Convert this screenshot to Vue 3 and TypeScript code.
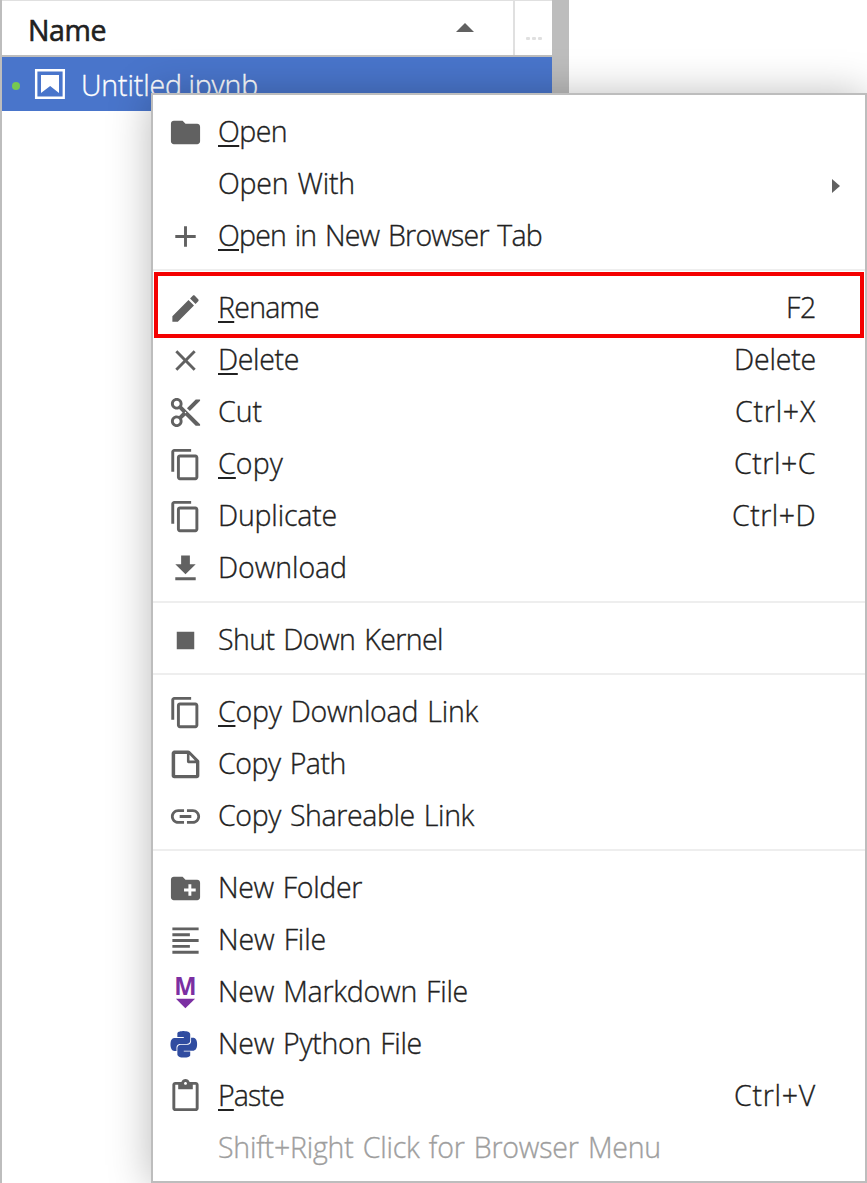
<script setup lang="ts">
interface MenuItem {
  label: string
  key?: string
  keyWidth?: number
  width: number
  mnemonic?: boolean
  icon?: string
  viewBox?: number
  glyph?: 'markdown' | 'python'
  submenu?: boolean
  disabled?: boolean
}

const copyIcon =
  'M11.9,1H3.2C2.4,1,1.7,1.7,1.7,2.5v10.2h1.5V2.5h8.7V1z M14.1,3.9h-8c-0.8,0-1.5,0.7-1.5,1.5v10.2c0,0.8,0.7,1.5,1.5,1.5h8c0.8,0,1.5-0.7,1.5-1.5V5.4C15.5,4.6,14.9,3.9,14.1,3.9z M14.1,15.5h-8V5.4h8V15.5z'

// One snake of the Python mark; the other is the same shape turned half a circle.
const snake =
  'M14.25.18l.9.2.73.26.59.3.45.32.34.34.25.34.16.33.1.3.04.26.02.2-.01.13V8.5l-.05.63-.13.55-.21.46-.26.38-.3.31-.33.25-.35.19-.35.14-.33.1-.3.07-.26.04-.21.02H8.77l-.69.05-.59.14-.5.22-.41.27-.33.32-.27.35-.2.36-.15.37-.1.35-.07.32-.04.27-.02.21v3.06H3.17l-.21-.03-.28-.07-.32-.12-.35-.18-.36-.26-.36-.36-.35-.46-.32-.59-.28-.73-.21-.88-.14-1.05-.05-1.23.06-1.22.16-1.04.24-.87.32-.71.36-.57.4-.44.42-.33.42-.24.4-.16.36-.1.32-.05.24-.01h.16l.06.01h8.16v-.83H6.18l-.01-2.75-.02-.37.05-.34.11-.31.17-.28.25-.26.31-.23.38-.2.44-.18.51-.15.58-.12.64-.1.71-.06.77-.04.84-.02 1.27.05z'

const groups: MenuItem[][] = [
  [
    { label: 'Open', width: 69, mnemonic: true, icon: 'M10 4H4c-1.1 0-1.99.9-1.99 2L2 18c0 1.1.9 2 2 2h16c1.1 0 2-.9 2-2V8c0-1.1-.9-2-2-2h-8l-2-2z' },
    { label: 'Open With', width: 137, submenu: true },
    { label: 'Open in New Browser Tab', width: 324, mnemonic: true, icon: 'M19 13h-6v6h-2v-6H5v-2h6V5h2v6h6v2z' },
  ],
  [
    { label: 'Rename', key: 'F2', keyWidth: 30, width: 101, mnemonic: true, icon: 'M3 17.25V21h3.75L17.81 9.94l-3.75-3.75L3 17.25zM20.71 7.04c.39-.39.39-1.02 0-1.41l-2.34-2.34c-.39-.39-1.02-.39-1.41 0l-1.83 1.83 3.75 3.75 1.83-1.83z' },
    { label: 'Delete', key: 'Delete', keyWidth: 82, width: 81, mnemonic: true, icon: 'M19 6.41L17.59 5 12 10.59 6.41 5 5 6.41 10.59 12 5 17.59 6.41 19 12 13.41 17.59 19 19 17.59 13.41 12z' },
    { label: 'Cut', key: 'Ctrl+X', keyWidth: 81, width: 44, icon: 'M9.64 7.64c.23-.5.36-1.05.36-1.64 0-2.21-1.79-4-4-4S2 3.79 2 6s1.79 4 4 4c.59 0 1.14-.13 1.64-.36L10 12l-2.36 2.36C7.14 14.13 6.59 14 6 14c-2.21 0-4 1.79-4 4s1.79 4 4 4 4-1.79 4-4c0-.59-.13-1.14-.36-1.64L12 14l7 7h3v-1L9.64 7.64zM6 8c-1.1 0-2-.89-2-2s.9-2 2-2 2 .89 2 2-.9 2-2 2zm0 12c-1.1 0-2-.89-2-2s.9-2 2-2 2 .89 2 2-.9 2-2 2zm6-7.5c-.28 0-.5-.22-.5-.5s.22-.5.5-.5.5.22.5.5-.22.5-.5.5zM19 3l-6 6 2 2 7-7V3z' },
    { label: 'Copy', key: 'Ctrl+C', keyWidth: 82, width: 65, mnemonic: true, icon: copyIcon, viewBox: 18 },
    { label: 'Duplicate', key: 'Ctrl+D', keyWidth: 84, width: 119, icon: copyIcon, viewBox: 18 },
    { label: 'Download', width: 129, icon: 'M19 9h-4V3H9v6H5l7 7 7-7zM5 18v2h14v-2H5z' },
  ],
  [{ label: 'Shut Down Kernel', width: 225, icon: 'M6 6h12v12H6z' }],
  [
    { label: 'Copy Download Link', width: 260, mnemonic: true, icon: copyIcon, viewBox: 18 },
    { label: 'Copy Path', width: 128, icon: 'M19.3 8.2l-5.5-5.5c-.3-.3-.7-.5-1.2-.5H3.9c-.8.1-1.6.9-1.6 1.8v14.1c0 .9.7 1.6 1.6 1.6h14.2c.9 0 1.6-.7 1.6-1.6V9.4c.1-.5-.1-.9-.4-1.2zm-5.8-3.3l3.4 3.6h-3.4V4.9zm3.9 12.7H4.7c-.1 0-.2 0-.2-.2V4.7c0-.2.1-.3.2-.3h7.2v4.4s0 .8.3 1.1c.3.3 1.1.3 1.1.3h4.3v7.2s-.1.2-.2.2z', viewBox: 22 },
    { label: 'Copy Shareable Link', width: 256, icon: 'M3.9 12c0-1.71 1.39-3.1 3.1-3.1h4V7H7c-2.76 0-5 2.24-5 5s2.24 5 5 5h4v-1.9H7c-1.71 0-3.1-1.39-3.1-3.1zM8 13h8v-2H8v2zm9-6h-4v1.9h4c1.71 0 3.1 1.39 3.1 3.1s-1.39 3.1-3.1 3.1h-4V17h4c2.76 0 5-2.24 5-5s-2.24-5-5-5z' },
  ],
  [
    { label: 'New Folder', width: 144, icon: 'M20 6h-8l-2-2H4c-1.11 0-1.99.89-1.99 2L2 18c0 1.11.89 2 2 2h16c1.11 0 2-.89 2-2V8c0-1.11-.89-2-2-2zm-1 8h-3v3h-2v-3h-3v-2h3V9h2v3h3v2z' },
    { label: 'New File', width: 108, icon: 'M15 15H3v2h12v-2zm0-8H3v2h12V7zM3 13h18v-2H3v2zm0 8h18v-2H3v2zM3 3v2h18V3H3z' },
    { label: 'New Markdown File', width: 250, glyph: 'markdown' },
    { label: 'New Python File', width: 204, glyph: 'python' },
    { label: 'Paste', key: 'Ctrl+V', keyWidth: 82, width: 66, mnemonic: true, icon: 'M19 2h-4.18C14.4.84 13.3 0 12 0c-1.3 0-2.4.84-2.82 2H5c-1.1 0-2 .9-2 2v16c0 1.1.9 2 2 2h14c1.1 0 2-.9 2-2V4c0-1.1-.9-2-2-2zm-7 0c.55 0 1 .45 1 1s-.45 1-1 1-1-.45-1-1 .45-1 1-1zm7 18H5V4h2v3h10V4h2v16z' },
    { label: 'Shift+Right Click for Browser Menu', width: 443, disabled: true },
  ],
]

// Tracks a text so that it takes up the given width.
const vFit = {
  mounted(el: HTMLElement, binding: { value: number }) {
    const count = (el.textContent ?? '').length
    const natural = el.getBoundingClientRect().width
    el.style.letterSpacing = `${(binding.value - natural) / count}px`
  },
}
</script>

<template>
  <main class="screen">
    <section class="browser">
      <header class="head">
        <div class="name">
          <span v-fit="78">Name</span>
          <svg class="sort" viewBox="0 0 18 9"><path d="M0 9L9 0l9 9z" /></svg>
        </div>
        <div class="more"><i></i><i></i><i></i></div>
      </header>
      <div class="file">
        <i class="dot"></i>
        <svg class="book" viewBox="0 0 22 22">
          <path d="M18.7 3.3v15.4H3.3V3.3h15.4m1.5-1.5H1.8v18.3h18.3l.1-18.3z" />
          <path d="M16.5 16.5l-5.4-4.3-5.6 4.3v-11h11z" />
        </svg>
        <span v-fit="177" class="filename">Untitled.ipynb</span>
      </div>
    </section>
    <div class="splitter"></div>

    <div class="menu">
      <ul v-for="(group, g) in groups" :key="g" class="group">
        <li v-for="item in group" :key="item.label" class="item" :class="{ disabled: item.disabled }">
          <span class="icon">
            <svg v-if="item.icon" :viewBox="`0 0 ${item.viewBox ?? 24} ${item.viewBox ?? 24}`">
              <path :d="item.icon" />
            </svg>
            <svg v-else-if="item.glyph === 'markdown'" class="markdown" viewBox="0 0 22 22">
              <text x="4" y="12.8" textLength="14" lengthAdjust="spacingAndGlyphs">M</text>
              <path d="M5 14.9h12l-6.1 6z" />
            </svg>
            <svg v-else-if="item.glyph === 'python'" class="python" viewBox="-2.3 -3.7 31.7 31.7">
              <path :d="snake" />
              <path :d="snake" transform="rotate(180 12 12)" />
            </svg>
          </span>
          <span class="label"><span v-fit="item.width" class="text"><u v-if="item.mnemonic">{{ item.label[0] }}</u>{{ item.mnemonic ? item.label.slice(1) : item.label }}</span></span>
          <span v-if="item.key" v-fit="item.keyWidth ?? 0" class="key">{{ item.key }}</span>
          <svg v-if="item.submenu" class="arrow" viewBox="0 0 8 14"><path d="M0 0l8 7-8 7z" /></svg>
        </li>
      </ul>
      <div class="highlight"></div>
    </div>
  </main>
</template>

<style>
body { margin: 0; background: #fff; overflow: hidden; }
</style>

<style scoped>
.screen {
  position: relative;
  display: flex;
  width: 867px;
  height: 1183px;
  box-sizing: border-box;
  overflow: hidden;
  background: #fff;
  color: #212121;
  font: 300 28.5px/52px "Open Sans", "Noto Sans", sans-serif;
  -webkit-text-stroke: .35px currentColor;
}
.browser { width: 552px; box-sizing: border-box; border-left: 2px solid #bdbdbd; }
.head { display: flex; height: 57px; box-sizing: border-box; border-top: 1px solid #e0e0e0; border-bottom: 2px solid #bdbdbd; }
.name { display: flex; flex: 1; align-items: center; justify-content: space-between; padding: 4px 39px 0 26px; font-weight: 400; -webkit-text-stroke-width: .6px; }
.sort { width: 18px; height: 9px; margin-top: -5px; fill: #616161; }
.more { display: flex; gap: 2px; width: 26px; border-left: 2px solid #e0e0e0; padding: 36px 0 0 11px; }
.more i { width: 4px; height: 3px; border-radius: 1px; background: #e0e0e0; }
.file { display: flex; align-items: center; height: 54px; padding-left: 10px; background: #4975cb; color: #fff; }
.dot { width: 8px; height: 8px; margin-top: 4px; border-radius: 50%; background: #76c850; }
.book { width: 36px; height: 36px; margin: 0 13px 0 12px; fill: #fff; }
.filename { padding-top: 2px; white-space: pre; }
.splitter { width: 17px; background: #bdbdbd; height: 100px; }
.menu {
  position: absolute;
  left: 151px;
  top: 93px;
  width: 716px;
  height: 1090px;
  box-sizing: border-box;
  padding-top: 11px;
  border: 2px solid #bdbdbd;
  background: #fff;
  box-shadow: 0 2px 40px rgba(0, 0, 0, .28);
}
.group { margin: 0; padding: 0; list-style: none; }
.group + .group { margin-top: 7px; padding-top: 11px; border-top: 2px solid #eee; }
.item { display: flex; align-items: center; height: 52px; padding: 0 49px 0 15px; white-space: pre; word-spacing: 2px; }
.icon { display: flex; width: 50px; height: 35px; }
.icon svg { width: 35px; height: 35px; overflow: visible; fill: #616161; }
.icon .markdown { fill: #7b2fa2; }
.icon .python { fill: #304ca0; }
.markdown text { font: 700 16px/1 "Open Sans", sans-serif; -webkit-text-stroke-width: 0; }
.label { flex: 1; margin-top: -2px; }
.text { display: inline-block; }
.key { margin-top: -2px; }
.label u { text-decoration-thickness: 2px; text-underline-offset: 3px; }
.disabled { color: #9e9e9e; }
.arrow { width: 8px; height: 14px; margin: 3px -24px 0 0; fill: #616161; }
.highlight { position: absolute; left: 1px; top: 177px; width: 702px; height: 58px; border: 4px solid #f40000; }
</style>
